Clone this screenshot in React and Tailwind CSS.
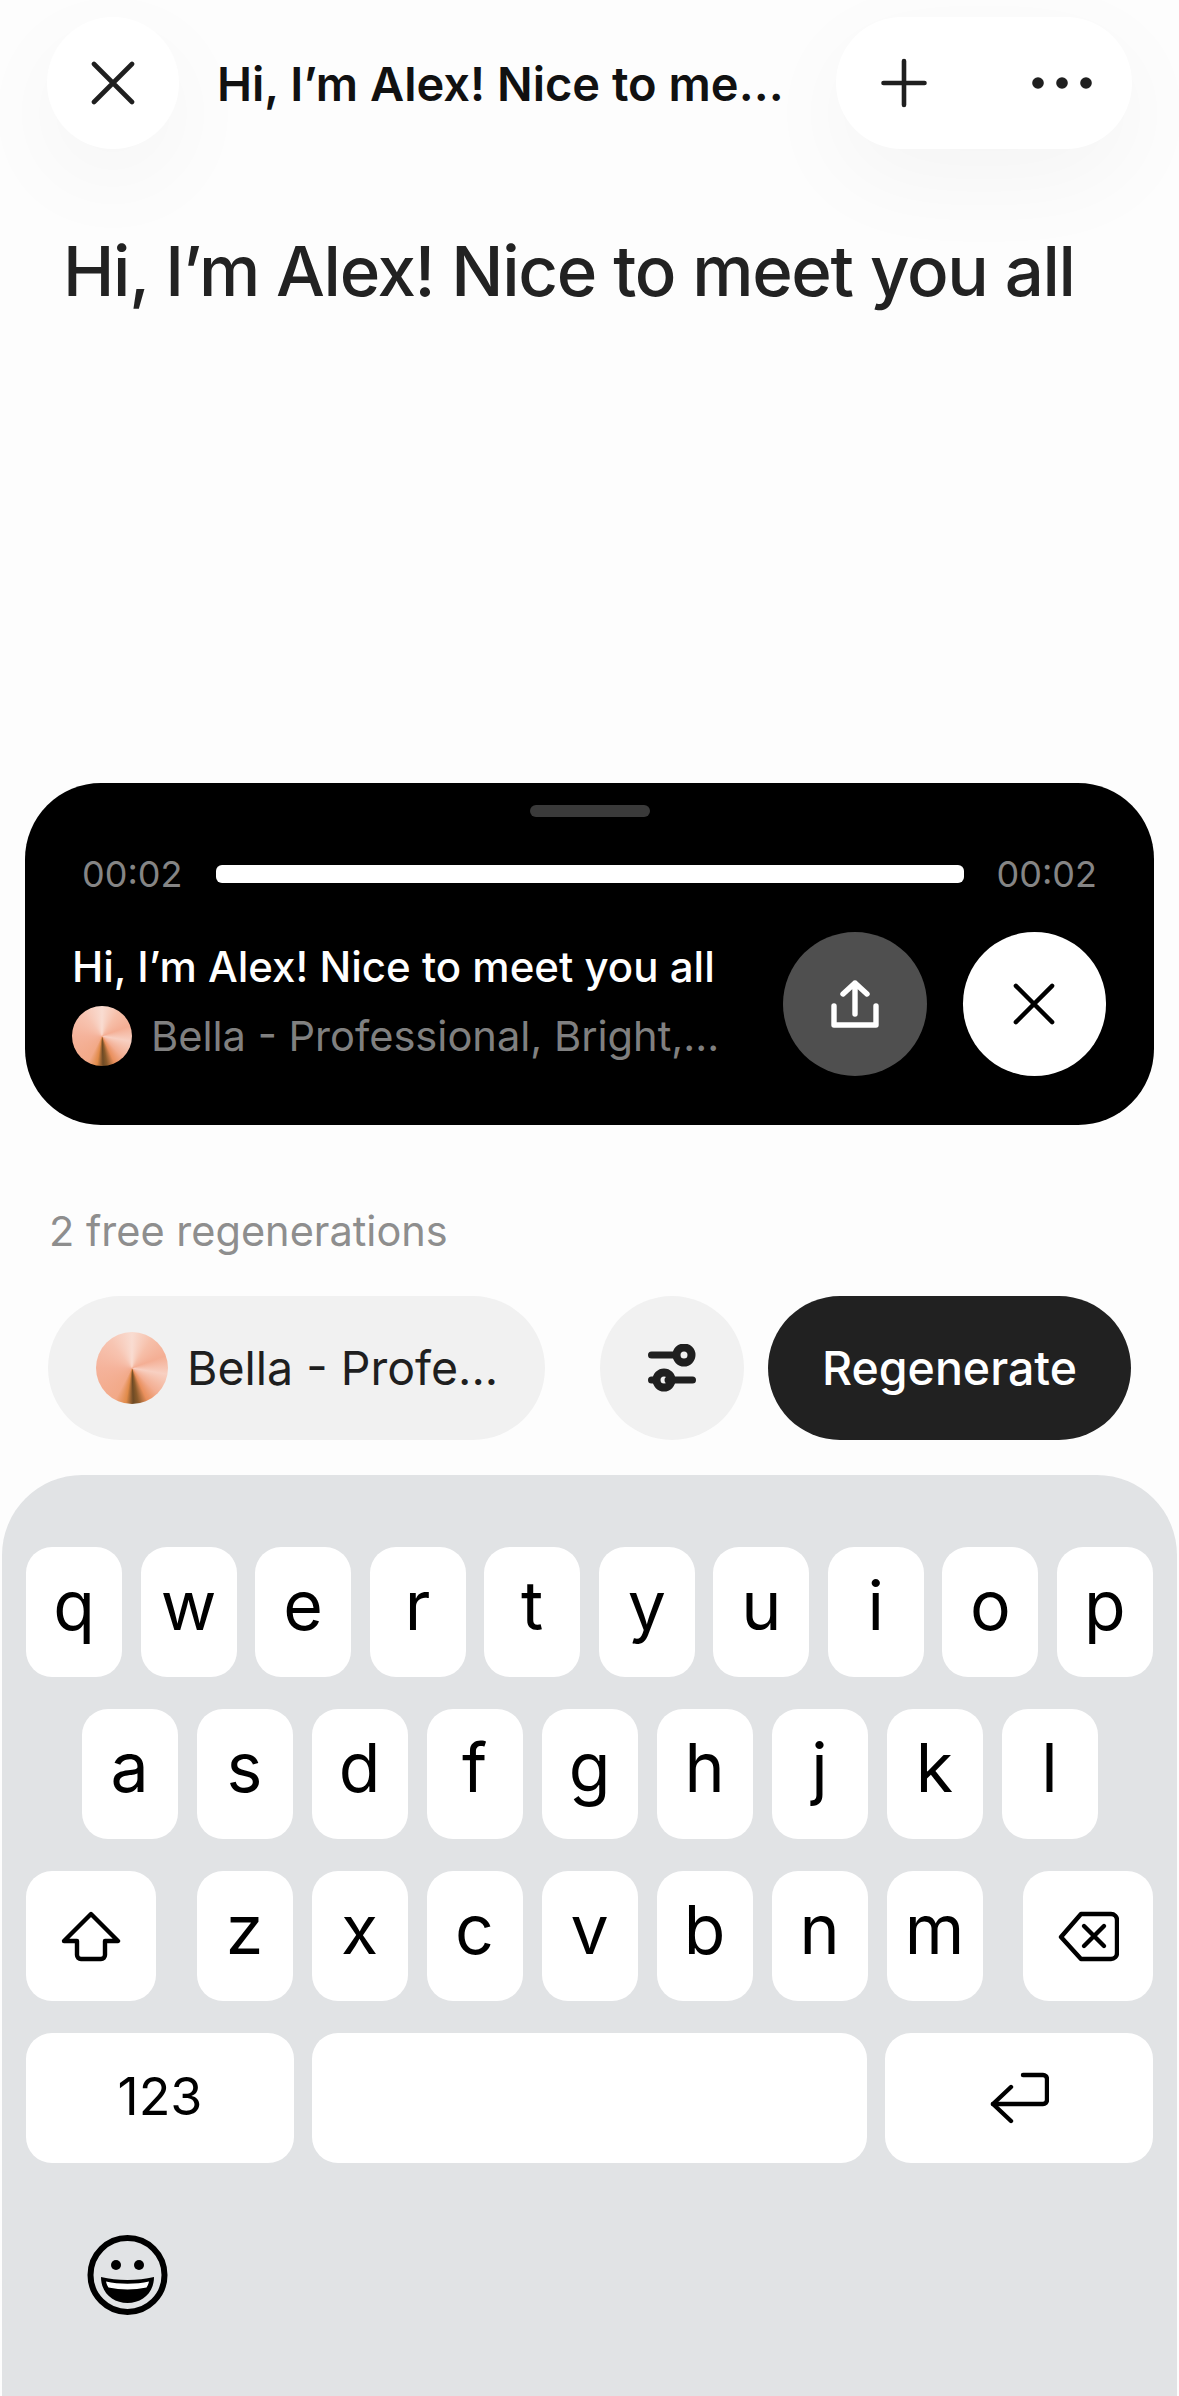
import React from 'react';

const row1 = ['q', 'w', 'e', 'r', 't', 'y', 'u', 'i', 'o', 'p'];
const row2 = ['a', 's', 'd', 'f', 'g', 'h', 'j', 'k', 'l'];
const row3 = ['z', 'x', 'c', 'v', 'b', 'n', 'm'];

const CloseIcon = ({ className }) => (
  <svg viewBox="0 0 44 44" className={className} fill="none" stroke="currentColor" strokeWidth="4.6" strokeLinecap="round">
    <path d="M3 3 41 41M41 3 3 41" />
  </svg>
);

const PlusIcon = () => (
  <svg viewBox="0 0 46 50" className="w-[46px] h-[50px] text-[#1f1f1f]" fill="none" stroke="currentColor" strokeWidth="4.6" strokeLinecap="round">
    <path d="M23 3V47M2.5 25H43.5" />
  </svg>
);

const DotsIcon = () => (
  <svg viewBox="0 0 60 12" className="w-[60px] h-[12px] text-[#1f1f1f]" fill="currentColor">
    <circle cx="6" cy="6" r="5.8" />
    <circle cx="30" cy="6" r="5.8" />
    <circle cx="54" cy="6" r="5.8" />
  </svg>
);

const ShareIcon = () => (
  <svg viewBox="0 0 48 48" className="w-[48px] h-[48px] text-white" fill="none" stroke="currentColor" strokeWidth="5.4" strokeLinecap="round" strokeLinejoin="round">
    <path d="M24 3V34M12 14 24 3 36 14" />
    <path d="M3 26V45H45V26" />
  </svg>
);

const SlidersIcon = () => (
  <svg viewBox="0 0 48 48" className="w-[48px] h-[48px] text-[#1f1f1f]" fill="none" stroke="currentColor" strokeLinecap="round">
    <path d="M3.5 11H28M20 36H44.5M3.5 36H8" strokeWidth="7" />
    <circle cx="36" cy="11" r="7.5" strokeWidth="8" />
    <circle cx="16" cy="36" r="7.5" strokeWidth="8" />
  </svg>
);

const ShiftIcon = () => (
  <svg viewBox="0 0 60 51" className="w-[60px] h-[51px] text-black" fill="none" stroke="currentColor" strokeWidth="4.4" strokeLinejoin="round">
    <path d="M30 3 57 30H44V44a4 4 0 0 1-4 4H20a4 4 0 0 1-4-4V30H3Z" />
  </svg>
);

const BackspaceIcon = () => (
  <svg viewBox="0 0 61 51" className="w-[61px] h-[51px] text-black" fill="none" stroke="currentColor" strokeWidth="4.4" strokeLinecap="round" strokeLinejoin="round">
    <path d="M23 3H53a6 6 0 0 1 6 6V42a6 6 0 0 1-6 6H23L3 26Z" />
    <path d="M26 15 46 35M46 15 26 35" />
  </svg>
);

const ReturnIcon = () => (
  <svg viewBox="0 0 59 52" className="w-[59px] h-[52px] text-black" fill="none" stroke="currentColor" strokeWidth="4.4" strokeLinecap="round" strokeLinejoin="round">
    <path d="M33 3H53a4 4 0 0 1 4 4V28a4 4 0 0 1-4 4H3" />
    <path d="M21 15 3 32 21 49" />
  </svg>
);

const EmojiIcon = () => (
  <svg viewBox="0 0 81 80" className="w-[81px] h-[80px] text-black">
    <circle cx="40.5" cy="40" r="37" fill="none" stroke="currentColor" strokeWidth="6" />
    <circle cx="29" cy="30" r="5" fill="currentColor" />
    <circle cx="52" cy="30" r="5" fill="currentColor" />
    <path d="M14 42C30 46 51 46 67 42C67 58 55 68 40.5 68C26 68 14 58 14 42Z" fill="currentColor" />
    <path d="M19 46.5C32 49.5 49 49.5 62 46.5C61.5 49 60.5 51 59.5 52.5C47 55 34 55 21.5 52.5C20.5 51 19.5 49 19 46.5Z" fill="white" />
  </svg>
);

const Avatar = ({ className }) => (
  <div className={`${className} shrink-0 rounded-full bg-[conic-gradient(#f9dcd1_0deg,#f6bfa9_35deg,#f4ae94_70deg,#f8d0c2_100deg,#f3ae92_135deg,#e98f5c_155deg,#8a5a2a_170deg,#6d4a25_178deg,#e08a48_190deg,#f2a988_208deg,#f5b39b_270deg,#f7c4b1_320deg,#f9dcd1_360deg)]`} />
);

const Key = ({ children, className = 'w-[96px]' }) => (
  <div className={`${className} h-[130px] shrink-0 rounded-[26px] bg-white flex items-center justify-center text-black`}>
    {children}
  </div>
);

const Letter = ({ label }) => (
  <Key>
    <span className="-mt-[14px] text-[68px] leading-none">{label}</span>
  </Key>
);

export default function App() {
  return (
    <div className="w-[1179px] h-[2396px] overflow-hidden bg-[#fdfdfd] flex flex-col font-['Inter',sans-serif] text-[#1f1f1f]">
      {/* Top bar */}
      <div className="flex items-center pl-[47px] pr-[47px] pt-[17px]">
        <div className="w-[132px] h-[132px] rounded-full bg-white shadow-[0_30px_100px_rgba(0,0,0,0.04)] flex items-center justify-center">
          <CloseIcon className="w-[44px] h-[44px] text-[#1f1f1f]" />
        </div>
        <div className="ml-[38px] flex-1 text-[47px] font-semibold leading-none whitespace-nowrap text-[#111111]">
          Hi, I’m Alex! Nice to me...
        </div>
        <div className="w-[296px] h-[132px] rounded-[66px] bg-white shadow-[0_30px_100px_rgba(0,0,0,0.04)] flex items-center justify-between pl-[45px] pr-[40px]">
          <PlusIcon />
          <DotsIcon />
        </div>
      </div>

      <h1 className="mt-[78px] ml-[63px] text-[69px] tracking-[-1.3px] font-medium leading-[88px] whitespace-nowrap text-[#222222]">
        Hi, I’m Alex! Nice to meet you all
      </h1>

      {/* Player card */}
      <div className="mt-[468px] mx-[25px] h-[342px] rounded-[76px] bg-black flex flex-col">
        <div className="mt-[22px] mx-auto w-[120px] h-[12px] rounded-full bg-[#3a3a3a]" />
        <div className="mt-[34px] flex items-center pl-[57px] pr-[57px] text-[36px] leading-[46px] text-[#858585]">
          <span className="w-[134px] shrink-0">00:02</span>
          <div className="w-[748px] h-[18px] rounded-[6px] bg-white" />
          <span className="ml-auto">00:02</span>
        </div>
        <div className="mt-[35px] flex items-center pl-[47px] pr-[48px]">
          <div className="w-[711px] shrink-0">
            <div className="text-[42px] font-medium leading-[50px] text-white whitespace-nowrap">Hi, I’m Alex! Nice to meet you all</div>
            <div className="mt-[14px] flex items-center gap-[19px]">
              <Avatar className="w-[60px] h-[60px]" />
              <span className="text-[41.6px] leading-[50px] text-[#808080] whitespace-nowrap">Bella - Professional, Bright,...</span>
            </div>
          </div>
          <div className="w-[144px] h-[144px] rounded-full bg-[#4f4f4f] flex items-center justify-center">
            <ShareIcon />
          </div>
          <div className="ml-[36px] w-[144px] h-[144px] rounded-full bg-white flex items-center justify-center">
            <CloseIcon className="w-[42px] h-[42px] text-black" />
          </div>
        </div>
      </div>

      <div className="mt-[81px] ml-[49px] text-[41.5px] leading-[50px] text-[#8e8e8e]">2 free regenerations</div>

      {/* Voice + regenerate */}
      <div className="mt-[40px] flex items-center pl-[48px]">
        <div className="w-[497px] h-[144px] rounded-[72px] bg-[#f1f1f1] flex items-center pl-[48px] gap-[19px]">
          <Avatar className="w-[72px] h-[72px]" />
          <span className="text-[46.5px] leading-none whitespace-nowrap">Bella - Profe...</span>
        </div>
        <div className="ml-[55px] w-[144px] h-[144px] rounded-full bg-[#f1f1f1] flex items-center justify-center">
          <SlidersIcon />
        </div>
        <div className="ml-[24px] w-[363px] h-[144px] rounded-[72px] bg-[#212121] flex items-center justify-center text-[46.5px] leading-none font-medium text-white">
          Regenerate
        </div>
      </div>

      {/* Keyboard */}
      <div className="mt-[35px] mx-[2px] flex-1 rounded-t-[80px] bg-[#e1e3e5] px-[24px] pt-[72px] flex flex-col gap-[32px]">
        <div className="flex justify-between">
          {row1.map((k) => <Letter key={k} label={k} />)}
        </div>
        <div className="flex justify-center gap-[19px]">
          {row2.map((k) => <Letter key={k} label={k} />)}
        </div>
        <div className="flex justify-between">
          <Key className="w-[130px]"><ShiftIcon /></Key>
          <div className="flex gap-[19px]">
            {row3.map((k) => <Letter key={k} label={k} />)}
          </div>
          <Key className="w-[130px]"><BackspaceIcon /></Key>
        </div>
        <div className="flex gap-[18px]">
          <Key className="w-[268px]"><span className="-mt-[2px] text-[52px] leading-none">123</span></Key>
          <Key className="flex-1" />
          <Key className="w-[268px]"><ReturnIcon /></Key>
        </div>
        <div className="mt-[40px] ml-[61px]">
          <EmojiIcon />
        </div>
      </div>
    </div>
  );
}
